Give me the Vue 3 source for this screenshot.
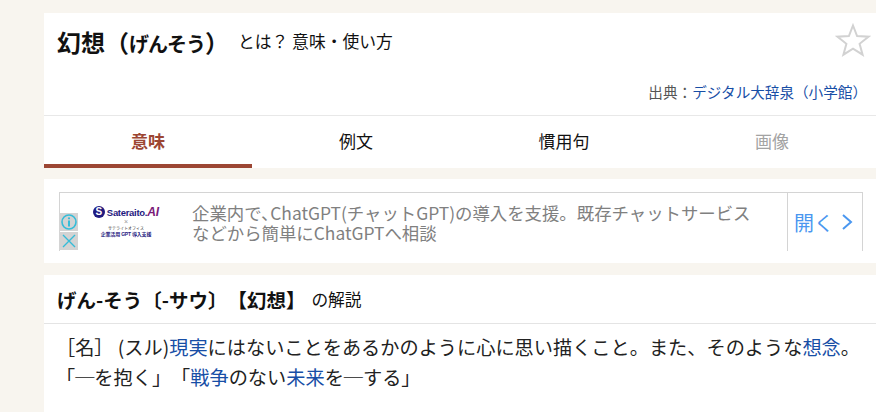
<script setup>
const tabs = [
  { label: "意味", state: "active" },
  { label: "例文", state: "" },
  { label: "慣用句", state: "" },
  { label: "画像", state: "off" },
];
</script>

<template>
  <div class="page">
    <section class="head card">
      <div class="title-row">
        <h1>幻想（<span class="kana">げんそう</span>）</h1>
        <span class="sub">とは？ 意味・使い方</span>
        <svg class="star" width="36" height="36" viewBox="0 0 36 36">
          <path d="M18 3.5l4.1 10.6 11.3.6-8.8 7.1 3 10.9L18 26.6l-9.6 6.1 3-10.9-8.8-7.1 11.3-.6z" fill="none" stroke="#d2d2d2" stroke-width="2" />
        </svg>
      </div>
      <div class="source">出典：<a>デジタル大辞泉（小学館）</a></div>
      <nav class="tabs">
        <div v-for="t in tabs" :key="t.label" :class="['tab', t.state]">{{ t.label }}</div>
      </nav>
    </section>

    <section class="ad-wrap card">
      <div class="ad">
        <div class="ad-icons">
          <span class="ad-icon">
            <svg width="18" height="18" viewBox="0 0 18 18">
              <circle cx="9" cy="9" r="7" fill="none" stroke="#35bcd8" stroke-width="1.6" />
              <circle cx="9" cy="5.3" r="1.1" fill="#35bcd8" />
              <rect x="8" y="7.5" width="2" height="6" fill="#35bcd8" />
            </svg>
          </span>
          <span class="ad-icon">
            <svg width="18" height="18" viewBox="0 0 18 18">
              <path d="M3 3l12 12M15 3L3 15" stroke="#35bcd8" stroke-width="1.4" fill="none" />
            </svg>
          </span>
        </div>
        <div class="logo">
          <div class="logo-main">
            <span class="logo-s">S</span><span class="logo-name">Sateraito.</span><span class="logo-ai">AI</span>
          </div>
          <div class="logo-x">×</div>
          <div class="logo-small">サテライトオフィス</div>
          <div class="logo-sub">企業活用 GPT 導入支援</div>
        </div>
        <div class="ad-text">企業内で､ChatGPT(チャットGPT)の導入を支援。既存チャットサービス<br />などから簡単にChatGPTへ相談</div>
        <div class="ad-open">
          <span>開く</span>
          <svg width="12" height="18" viewBox="0 0 12 18">
            <path d="M2 2l8 7-8 7" fill="none" stroke="#4a97f0" stroke-width="2" />
          </svg>
        </div>
      </div>
    </section>

    <section class="entry card">
      <h2><b>げん-そう〔-サウ〕【幻想】</b><span>の解説</span></h2>
      <div class="body">
        <p>［名］ (スル)<a>現実</a>にはないことをあるかのように心に思い描くこと。また、そのような<a>想念</a>。</p>
        <p>「─を抱く」「<a>戦争</a>のない<a>未来</a>を─する」</p>
      </div>
    </section>
  </div>
</template>

<style>
html, body {
  margin: 0;
  background: #f8f5ef;
  overflow: hidden;
}
</style>

<style scoped>
.page {
  display: flex;
  flex-direction: column;
  gap: 11px;
  height: 412px;
  padding: 13px 0 0 44px;
  box-sizing: border-box;
  font-family: "Noto Sans CJK JP", "Liberation Sans", sans-serif;
  color: #111;
  text-spacing-trim: space-all;
}
.card {
  background: #fff;
}
.title-row {
  display: flex;
  align-items: center;
  height: 56px;
  padding-left: 13px;
  position: relative;
}
h1 {
  margin: 0;
  font-size: 24px;
  font-weight: 700;
  color: #111;
}
.kana {
  font-size: 20px;
  letter-spacing: -1px;
}
.sub {
  margin-left: 9px;
  font-size: 16.8px;
}
.star {
  position: absolute;
  right: 5px;
  top: 9px;
}
.source {
  height: 47px;
  padding: 12px 9px 0 0;
  box-sizing: border-box;
  text-align: right;
  font-size: 14.6px;
  color: #555;
  border-bottom: 1px solid #e8e8e8;
}
.source a {
  color: #174ea6;
}
.tabs {
  display: grid;
  grid-template-columns: repeat(4, 1fr);
  height: 52px;
}
.tab {
  display: flex;
  align-items: center;
  justify-content: center;
  padding-bottom: 4px;
  font-size: 17px;
}
.tab.active {
  color: #9c4633;
  font-weight: 700;
  border-bottom: 4px solid #9c4633;
  padding-bottom: 0;
}
.tab.off {
  color: #a3a3a3;
}
.ad-wrap {
  height: 84px;
  margin-bottom: 1px;
  padding: 13px 13px 0 15px;
  box-sizing: border-box;
}
.ad {
  display: flex;
  height: 58px;
  border: 1px solid #d4d4d4;
  border-bottom: 0;
  position: relative;
}
.ad-icons {
  position: absolute;
  left: 0;
  top: 20px;
  width: 18px;
  display: flex;
  flex-direction: column;
  gap: 1px;
}
.ad-icon {
  display: block;
  width: 18px;
  height: 18px;
  background: #d3d3d3;
}
.ad-icon svg {
  display: block;
}
.logo {
  width: 132px;
  flex: none;
  display: flex;
  flex-direction: column;
  align-items: center;
  padding-top: 13px;
  box-sizing: border-box;
  font-family: "Liberation Sans", "Noto Sans CJK JP", sans-serif;
}
.logo-main {
  display: flex;
  align-items: center;
  height: 12px;
  font-size: 9.5px;
  font-weight: 700;
  color: #1f1a80;
}
.logo-name {
  font-family: "Liberation Sans Narrow", "Liberation Sans", sans-serif;
  letter-spacing: -0.3px;
}
.logo-s {
  width: 12px;
  height: 12px;
  border-radius: 50%;
  background: #1f1a80;
  color: #fff;
  font-size: 10px;
  line-height: 12px;
  text-align: center;
  margin-right: 2px;
}
.logo-ai {
  color: #7a1a78;
  font-style: italic;
  font-size: 12px;
}
.logo-x {
  font-size: 7px;
  line-height: 8px;
  color: #999;
}
.logo-small {
  font-size: 4px;
  line-height: 5px;
  color: #333;
}
.logo-sub {
  font-size: 5px;
  line-height: 6px;
  font-weight: 700;
  letter-spacing: -0.2px;
  color: #1f1a80;
}
.ad-text {
  width: 595px;
  flex: none;
  padding-top: 10px;
  box-sizing: border-box;
  font-size: 17.4px;
  line-height: 20px;
  color: #808080;
  white-space: nowrap;
}
.ad-open {
  flex: 1;
  display: flex;
  align-items: center;
  gap: 7px;
  padding-left: 6px;
  border-left: 1px solid #d4d4d4;
  color: #4a97f0;
  font-size: 20px;
}
.entry {
  flex: 1;
}
h2 {
  display: flex;
  align-items: center;
  height: 48px;
  margin: 0;
  padding-left: 13px;
  border-bottom: 1px solid #e4e4e4;
  font-size: 16.7px;
  font-weight: 400;
}
h2 b {
  font-size: 19.5px;
  font-weight: 700;
}
h2 span {
  margin-left: 6px;
}
.body {
  padding: 8px 0 0 12px;
  font-size: 19.2px;
  line-height: 30px;
  color: #222;
}
.body p {
  margin: 0;
  white-space: nowrap;
}
.body a {
  color: #174ea6;
}
</style>
